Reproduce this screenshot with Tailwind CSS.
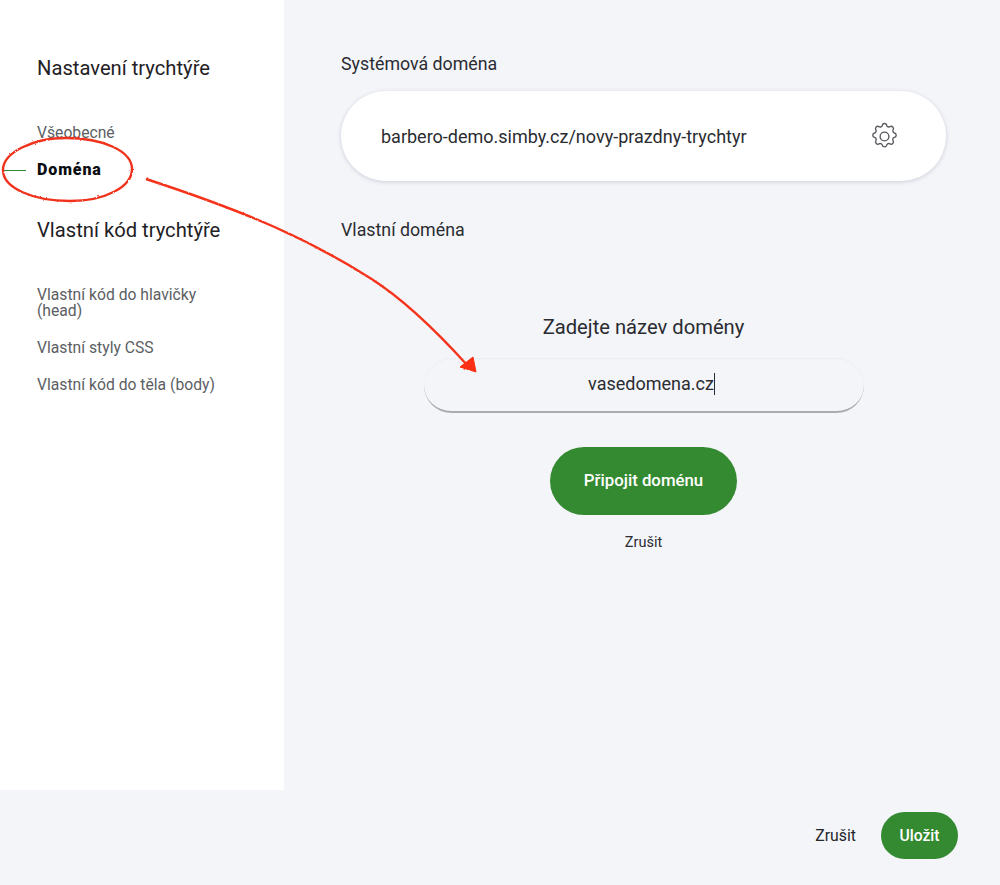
<!DOCTYPE html>
<html lang="en">
<head>
  <meta charset="UTF-8">
  <meta name="viewport" content="width=device-width, initial-scale=1.0">
  <title>Doména</title>
  <script src="https://cdn.jsdelivr.net/npm/@tailwindcss/browser@4"></script>
</head>
<body class="relative h-[885px] overflow-hidden bg-[#f4f5f9] font-['Roboto',sans-serif] text-[#24262b]">
  <div class="flex h-[790px]">
    <!-- sidebar -->
    <aside class="w-[284px] shrink-0 bg-white pl-[37px] pr-[50px] pt-[56px]">
      <h2 class="text-[20.2px] leading-[24px] text-[#1f2125]">Nastavení trychtýře</h2>
      <a class="mt-[44px] block text-[15.7px] leading-[18px] text-[#5c5e63]">Všeobecné</a>
      <a class="relative mt-[19px] block text-[16px] font-black leading-[18px] tracking-[0.9px] text-[#0c0d12]">
        <span class="absolute left-[-34px] top-[9px] h-px w-[23px] bg-[#2a8a35]"></span>
        Doména
      </a>
      <h2 class="mt-[39px] text-[20.2px] leading-[24px] text-[#1f2125]">Vlastní kód trychtýře</h2>
      <a class="mt-[45px] block text-[15.7px] leading-[16px] text-[#5c5e63]">Vlastní kód do hlavičky (head)</a>
      <a class="mt-[20px] block text-[15.7px] leading-[18px] text-[#5c5e63]">Vlastní styly CSS</a>
      <a class="mt-[19px] block text-[15.7px] leading-[18px] text-[#5c5e63]">Vlastní kód do těla (body)</a>
    </aside>

    <!-- main -->
    <main class="flex-1 pl-[57px] pr-[54px] pt-[54px]">
      <h3 class="text-[17.8px] leading-[20px] text-[#2a2c31]">Systémová doména</h3>
      <div class="mt-[17px] flex h-[90px] items-center justify-between rounded-[45px] bg-white pl-[40px] pr-[46px] shadow-[0_1px_4px_rgba(70,74,110,0.22)]">
        <span class="text-[18px] text-[#2a2c31]">barbero-demo.simby.cz/novy-prazdny-trychtyr</span>
        <svg class="h-[31px] w-[31px] text-[#55575c]" fill="none" stroke="currentColor" stroke-width="1.05" viewBox="0 0 24 24">
          <path stroke-linecap="round" stroke-linejoin="round" d="M10.3 3.3c.4-1.8 3-1.8 3.4 0a1.7 1.7 0 0 0 2.6 1.1c1.5-.9 3.3.8 2.4 2.4a1.7 1.7 0 0 0 1 2.5c1.8.4 1.8 3 0 3.4a1.7 1.7 0 0 0-1 2.6c.9 1.5-.9 3.3-2.4 2.4a1.7 1.7 0 0 0-2.6 1c-.4 1.8-3 1.8-3.4 0a1.7 1.7 0 0 0-2.6-1c-1.5.9-3.3-.9-2.4-2.4a1.7 1.7 0 0 0-1-2.6c-1.8-.4-1.8-3 0-3.4a1.7 1.7 0 0 0 1-2.5c-.9-1.6.9-3.3 2.4-2.4a1.7 1.7 0 0 0 2.6-1.1z"></path>
          <circle cx="12" cy="12" r="3.4"></circle>
        </svg>
      </div>

      <h3 class="mt-[39px] text-[17.8px] leading-[20px] text-[#2a2c31]">Vlastní doména</h3>

      <div class="mt-[75px] flex flex-col items-center">
        <p class="text-[20.2px] leading-[24px] text-[#2a2c31]">Zadejte název domény</p>
        <div class="mt-[19px] flex h-[55px] w-[440px] items-center justify-center rounded-[28px] border-b-2 border-[#a9abb0] pb-[2px] pl-[16px] shadow-[inset_0_1px_1px_rgba(60,64,100,0.04)]">
          <span class="border-r border-[#2a2c31] text-[18px] leading-[22px] text-[#2a2c31]">vasedomena.cz</span>
        </div>
        <button class="mt-[34px] h-[68px] w-[187px] rounded-[34px] bg-[#348a31] text-[16.8px] font-medium text-white">Připojit doménu</button>
        <a class="mt-[19px] text-[14.5px] leading-[17px] text-[#2a2c31]">Zrušit</a>
      </div>
    </main>
  </div>

  <!-- footer -->
  <footer class="flex items-center justify-end gap-[25px] pr-[42px] pt-[22px]">
    <a class="text-[15.8px] text-[#24262b]">Zrušit</a>
    <button class="h-[47px] w-[77px] rounded-[24px] bg-[#348a31] text-[15.7px] font-medium text-white">Uložit</button>
  </footer>

  <!-- hand-drawn annotation -->
  <svg class="pointer-events-none absolute inset-0" width="1000" height="885" viewBox="0 0 1000 885" fill="none">
    <defs>
      <filter id="rough" x="0" y="0" width="100%" height="100%" filterUnits="userSpaceOnUse">
        <feTurbulence type="fractalNoise" baseFrequency="0.35" numOctaves="2" seed="4"></feTurbulence>
        <feDisplacementMap in="SourceGraphic" scale="2.2"></feDisplacementMap>
        <feGaussianBlur stdDeviation="0.3"></feGaussianBlur>
      </filter>
    </defs>
    <g filter="url(#rough)">
      <path d="M3 170C3 152 34 138 66 138C103 138 132 151 132 169C132 187 105 201 70 201C33 201 3 188 3 170Z" stroke="#f0331c" stroke-width="2.4"></path>
      <path d="M146 179C250 213 310 240 370 278C405 300 440 335 468 366" stroke="#f5331a" stroke-width="2.4"></path>
      <path d="M473 357L460 367L476 372Z" fill="#fb2f12" stroke="#fb2f12" stroke-linejoin="round"></path>
    </g>
  </svg>
</body>
</html>
